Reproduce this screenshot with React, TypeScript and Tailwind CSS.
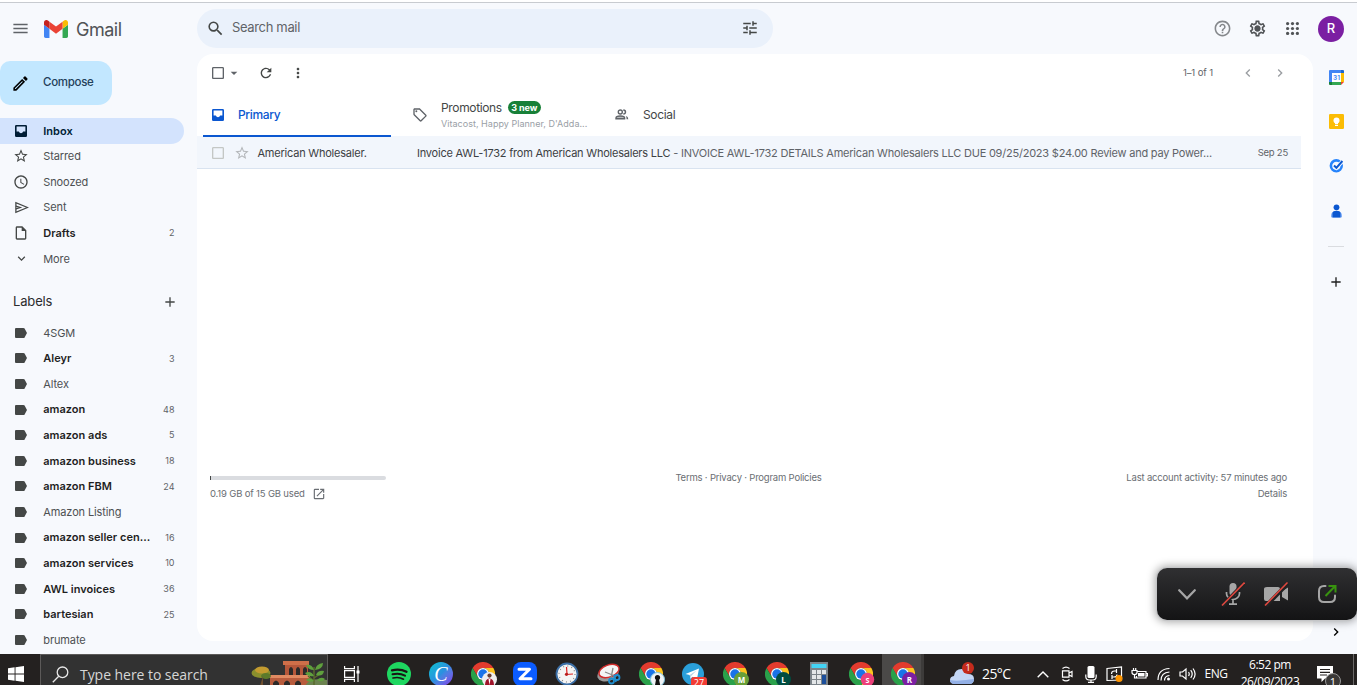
import React from 'react';
import {
    MdMenu, MdSearch, MdTune, MdHelpOutline, MdOutlineSettings, MdOutlineModeEdit,
    MdStarBorder, MdAccessTime, MdOutlineInsertDriveFile, MdExpandMore, MdAdd,
    MdCheckBoxOutlineBlank, MdArrowDropDown, MdRefresh, MdMoreVert, MdChevronLeft, MdChevronRight,
    MdOutlineLocalOffer, MdOpenInNew, MdMic,
} from 'react-icons/md';

interface NavItem {
    name: string;
    icon?: React.ReactNode;
    count?: number;
    bold?: boolean;
    active?: boolean;
}

const InboxIcon = () => (
    <svg viewBox="0 0 12 12" className="w-3 h-3" fill="currentColor" fillRule="evenodd">
        <path d="M1.300 0h9.400Q12 0 12 1.300v9.400q0 1.300-1.300 1.300H1.300Q0 12 0 10.700V1.300Q0 0 1.300 0zM1.600 1.500v5h2.200Q4.500 8.200 6 8.200t2.200-1.700h2.200v-5z" />
    </svg>
);

const SendIcon = () => (
    <svg viewBox="0 0 24 24" className="w-[15px] h-[15px]" fill="none" stroke="currentColor" strokeWidth="2">
        <path d="M3 4.200v15.600L21.500 12z" />
        <path d="M3 9.800l7 2.200-7 2.200" />
    </svg>
);

const PeopleIcon = () => (
    <svg viewBox="0 0 14 11" className="w-[14px] h-[11px]" fill="none" stroke="currentColor" strokeWidth="1.400">
        <circle cx="5.300" cy="3" r="2" />
        <path d="M1 9.800V9q0-2 4.300-2t4.300 2v.8z" fill="#b9bbbc" />
        <path d="M8.300 1q2.200.2 2.200 2t-2.200 2" />
        <path d="M10.800 7q2.500.6 2.500 3.200h-1.700q0-2-.8-3.200z" fill="currentColor" stroke="none" />
    </svg>
);

const LabelIcon = () => (
    <svg viewBox="0 0 12 10" className="w-3 h-[10px] text-[#444746]" fill="currentColor">
        <path d="M1 0h7.400q.8 0 1.200.6L12 5 9.600 9.400q-.4.6-1.200.6H1q-1 0-1-1V1q0-1 1-1z" />
    </svg>
);

const AppsIcon = () => (
    <svg viewBox="0 0 13 13" className="w-[13px] h-[13px]" fill="currentColor">
        {[1.600, 6.500, 11.400].map((y) => [1.600, 6.500, 11.400].map((x) => <circle key={`${x}-${y}`} cx={x} cy={y} r="1.600" />))}
    </svg>
);

const folders: NavItem[] = [
    { name: 'Inbox', icon: <InboxIcon />, bold: true, active: true },
    { name: 'Starred', icon: <MdStarBorder className="w-4 h-4" /> },
    { name: 'Snoozed', icon: <MdAccessTime className="w-4 h-4" /> },
    { name: 'Sent', icon: <SendIcon /> },
    { name: 'Drafts', icon: <MdOutlineInsertDriveFile className="w-4 h-4" />, count: 2, bold: true },
    { name: 'More', icon: <MdExpandMore className="w-[15px] h-[15px]" /> },
];

const labels: NavItem[] = [
    { name: '4SGM' },
    { name: 'Aleyr', count: 3, bold: true },
    { name: 'Altex' },
    { name: 'amazon', count: 48, bold: true },
    { name: 'amazon ads', count: 5, bold: true },
    { name: 'amazon business', count: 18, bold: true },
    { name: 'amazon FBM', count: 24, bold: true },
    { name: 'Amazon Listing' },
    { name: 'amazon seller cen...', count: 16, bold: true },
    { name: 'amazon services', count: 10, bold: true },
    { name: 'AWL invoices', count: 36, bold: true },
    { name: 'bartesian', count: 25, bold: true },
    { name: 'brumate' },
];

const textStyle = (item: NavItem) => {
    if (item.active) return 'font-semibold text-[#001d35]';
    return item.bold ? 'font-semibold text-[#1f1f1f]' : 'tracking-[-0.12px] text-[#4d5052]';
};

const NavRow = ({ item }: { item: NavItem }) => (
    <div className={`flex items-center h-[25.6px] w-[184px] pr-[9.5px] rounded-r-full ${item.active ? 'bg-[#d3e3fd] text-[#001d35]' : 'text-[#444746]'}`}>
        <span className="w-[42px] flex justify-center shrink-0">{item.icon || <LabelIcon />}</span>
        <span className={`flex-1 pl-[1.3px] whitespace-nowrap text-[11px] ${textStyle(item)}`}>{item.name}</span>
        {item.count && <span className="text-[9px] text-[#5f6368]">{item.count}</span>}
    </div>
);

const GmailLogo = () => (
    <svg viewBox="52 42 88 66" className="w-6 h-[18px]">
        <path fill="#4285f4" d="M58 108h14V74L52 59v43c0 3.320 2.690 6 6 6" />
        <path fill="#34a853" d="M120 108h14c3.320 0 6-2.690 6-6V59l-20 15" />
        <path fill="#fbbc04" d="M120 48v26l20-15v-8c0-7.420-8.470-11.650-14.400-7.200" />
        <path fill="#ea4335" d="M72 74V48l24 18 24-18v26L96 92" />
        <path fill="#c5221f" d="M52 51v8l20 15V48l-5.600-4.200c-5.940-4.450-14.400-.22-14.400 7.200" />
    </svg>
);

const Header = () => (
    <header className="flex items-center h-[51px] shrink-0">
        <div className="flex items-center w-[197px] pl-[11px]">
            <MdMenu className="w-[19px] h-[19px] text-[#5f6368]" />
            <div className="flex items-center ml-[14px] gap-2">
                <GmailLogo />
                <span className="pt-[2px] text-[18px] leading-none text-[#505356] tracking-[-0.5px]">Gmail</span>
            </div>
        </div>
        <div className="flex items-center w-[576px] h-[39px] rounded-full bg-[#eaf1fb] pl-[9px] pr-[14px] pb-px">
            <MdSearch className="w-[19px] h-[19px] text-[#444746]" />
            <span className="flex-1 ml-[7px] text-[13px] tracking-[-0.35px] text-[#5f6368]">Search mail</span>
            <MdTune className="w-[18px] h-[18px] text-[#444746]" />
        </div>
        <div className="flex items-center ml-auto pr-[13px] text-[#505356]">
            <span className="w-[35px] flex justify-center"><MdHelpOutline className="w-[19px] h-[19px] text-[#85888c]" /></span>
            <span className="relative w-[35px] flex justify-center items-center">
                <MdOutlineSettings className="w-[19px] h-[19px]" />
                <span className="absolute w-[5px] h-[5px] rounded-full bg-[#505356]" />
            </span>
            <span className="w-[35px] flex justify-center"><AppsIcon /></span>
            <span className="ml-2 w-[26px] h-[26px] rounded-full bg-[#7b1fa2] text-white text-[13px] font-medium flex items-center justify-center">R</span>
        </div>
    </header>
);

const Sidebar = () => (
    <aside className="w-[197px] shrink-0 flex flex-col">
        <div className="mt-[7px] w-28 h-11 bg-[#c2e7ff] rounded-r-[14px] rounded-l-[10px] flex items-center shrink-0">
            <MdOutlineModeEdit className="ml-[11px] w-[19px] h-[19px] text-black" />
            <span className="ml-[13px] text-[11.5px] font-medium tracking-[-0.3px] text-[#23405a]">Compose</span>
        </div>
        <nav className="mt-[13px]">
            {folders.map((item) => <NavRow key={item.name} item={item} />)}
        </nav>
        <div className="flex items-center h-[30px] mt-[15px] mb-[3.5px] pl-[13px] pr-[19px] shrink-0">
            <span className="flex-1 text-[13px] tracking-[-0.15px] text-[#2b2c2d]">Labels</span>
            <MdAdd className="w-4 h-4 text-[#444746]" />
        </div>
        <nav>
            {labels.map((item) => <NavRow key={item.name} item={item} />)}
        </nav>
    </aside>
);

const Toolbar = () => (
    <div className="flex items-center h-[38px] pl-[13px] pr-[25px] text-[#5f6368]">
        <MdCheckBoxOutlineBlank className="w-4 h-4" />
        <MdArrowDropDown className="w-4 h-4" />
        <MdRefresh className="ml-4 w-4 h-4 text-[#444746]" />
        <MdMoreVert className="ml-4 w-4 h-4 text-[#444746]" />
        <span className="ml-auto text-[9.5px] tracking-[-0.1px]">1–1 of 1</span>
        <MdChevronLeft className="ml-[27px] w-4 h-4 text-[#9a9da1]" />
        <MdChevronRight className="ml-4 w-4 h-4 text-[#9a9da1]" />
    </div>
);

const Tabs = () => (
    <div className="flex h-[45px] pl-[6px]">
        <div className="w-[188px] flex items-center pl-[9px] pt-[2px] border-b-2 border-[#0b57d0] text-[#0b57d0]">
            <InboxIcon />
            <span className="ml-[14px] text-[12px] font-medium tracking-[-0.35px]">Primary</span>
        </div>
        <div className="w-[202px] flex items-center pl-[21px]">
            <MdOutlineLocalOffer className="w-4 h-4 text-[#5f6368]" />
            <div className="ml-[13px] pt-[2px]">
                <div className="flex items-center gap-[6px] h-4 text-[12px] tracking-[-0.35px] text-[#444746] whitespace-nowrap">
                    Promotions
                    <span className="h-[13px] px-[3.5px] rounded-full bg-[#188038] text-white text-[9px] tracking-[-0.1px] font-bold flex items-center">3 new</span>
                </div>
                <div className="h-4 leading-4 text-[9px] tracking-[0.03px] text-[#9aa0a6] whitespace-nowrap">Vitacost, Happy Planner, D'Adda...</div>
            </div>
        </div>
        <div className="flex items-center pl-[22px] text-[#5f6368]">
            <PeopleIcon />
            <span className="ml-[14px] text-[12px] tracking-[-0.35px] text-[#444746]">Social</span>
        </div>
    </div>
);

const MailRow = () => (
    <div className="flex items-center h-[30px] pt-[2px] -mt-px w-[1104px] bg-[#f2f6fc] border-b border-[#d9e3f0] box-content text-[11px] tracking-[-0.22px] text-[#3c4043] whitespace-nowrap">
        <MdCheckBoxOutlineBlank className="ml-[13px] w-4 h-4 text-[#c4c7c5]" />
        <MdStarBorder className="ml-2 w-4 h-4 text-[#b4b7ba]" />
        <span className="ml-[7.5px] w-[159.5px]">American Wholesaler.</span>
        <span>Invoice AWL-1732 from American Wholesalers LLC</span>
        <span className="ml-[3px] text-[#5f6368]">- INVOICE AWL-1732 DETAILS American Wholesalers LLC DUE 09/25/2023 $24.00 Review and pay Power...</span>
        <span className="ml-auto mr-[13px] text-[9.5px] text-[#5f6368]">Sep 25</span>
    </div>
);

const Footer = () => (
    <div className="flex justify-between mt-[301px] pl-[13px] pr-[26px] text-[9.5px] tracking-[-0.17px] leading-4 text-[#6a6e73]">
        <div className="w-[360px]">
            <div className="h-4 flex items-center">
                <div className="w-[176px] h-1 bg-[#dadce0] rounded-r-sm"><div className="w-px h-1 bg-[#444746]" /></div>
            </div>
            <div className="flex items-center gap-[7px]">0.19 GB of 15 GB used <MdOpenInNew className="w-[14px] h-[14px]" /></div>
        </div>
        <div className="w-[360px] text-center tracking-[-0.2px]">Terms · Privacy · Program Policies</div>
        <div className="w-[360px] text-right">
            <div>Last account activity: 57 minutes ago</div>
            <div>Details</div>
        </div>
    </div>
);

const SidePanel = () => (
    <aside className="w-11 pl-[2px] shrink-0 flex flex-col items-center">
        <div className="h-[46px] flex items-center">
            <svg viewBox="0 0 15 15" className="w-[15px] h-[15px]">
                <path fill="#4285f4" d="M1 0h11v3H3v9H0V1q0-1 1-1z" />
                <path fill="#1967d2" d="M12 0h2q1 0 1 1v2h-3z" />
                <path fill="#fbbc04" d="M12 3h3v9h-3z" />
                <path fill="#34a853" d="M3 12h9v3H3z" />
                <path fill="#188038" d="M0 12h3v3H1q-1 0-1-1z" />
                <path fill="#ea4335" d="M12 12h3l-3 3z" />
                <path fill="#fff" d="M3 3h9v9H3z" />
                <text x="7.500" y="10" textAnchor="middle" fontSize="6.500" fontWeight="600" fill="#4285f4">31</text>
            </svg>
        </div>
        <div className="h-[43px] flex items-center">
            <svg viewBox="0 0 15 15" className="w-[15px] h-[15px]">
                <rect width="15" height="15" rx="1.200" fill="#fbbc04" />
                <circle cx="7.500" cy="6.600" r="3" fill="#fff" />
                <path fill="#fff" d="M6 9h3v1.300H6zM6 11h3v1H6z" />
            </svg>
        </div>
        <div className="h-[45px] flex items-center">
            <svg viewBox="0 0 15 15" className="w-[15px] h-[15px]" fill="none">
                <circle cx="7.300" cy="7.800" r="5.400" stroke="#2684fc" strokeWidth="2.600" />
                <path d="M5 7.500l2.400 2.300 6-6.600" stroke="#f8fafd" strokeWidth="3.600" />
                <path d="M5 7.500l2.400 2.300L13.400 3" stroke="#0b57d0" strokeWidth="2" />
            </svg>
        </div>
        <div className="h-[46px] flex items-center">
            <svg viewBox="0 0 13 15" className="w-[13px] h-[15px]">
                <path fill="#7baaf7" d="M1 12q0-4 3-4.500h5q3 .5 3 4.500v.5q0 1-1 1H2q-1 0-1-1z" />
                <path fill="#0b57d0" d="M2.500 13.500V9q.5-2.200 4-2.200T10.500 9v4.500z" />
                <circle cx="6.500" cy="3.300" r="2.900" fill="#0b57d0" />
            </svg>
        </div>
        <div className="mt-3 w-4 h-px bg-[#dadce0]" />
        <MdAdd className="mt-[27px] w-4 h-4 text-[#1f1f1f]" />
        <MdChevronRight className="mt-auto mb-[14px] w-4 h-4 text-black" />
    </aside>
);

// Meeting controls that float above the page
const MeetingBar = () => (
    <div className="absolute left-[1157px] top-[568px] w-[200px] h-[52px] rounded-[10px] bg-linear-to-b from-[#303032] to-[#141415] ring-1 ring-[#c4c5c7] shadow-[0_0_9px_2px_rgba(0,0,0,0.35)] flex items-center text-[#a6a6a6]">
        <svg viewBox="0 0 18 11" className="ml-[21px] w-[18px] h-[11px]" fill="none" stroke="currentColor" strokeWidth="2.200" strokeLinecap="round">
            <path d="M1.200 1.200L9 9.300l7.800-8.100" />
        </svg>
        <svg viewBox="0 0 24 26" className="ml-[25px] w-6 h-[26px]" fill="none">
            <rect x="8.500" y="2" width="7" height="13" rx="3.500" fill="currentColor" />
            <path d="M5.500 11v1.500a6.500 6 0 0 0 13 0V11M12 19v4M8 23.200h8" stroke="currentColor" strokeWidth="1.700" />
            <path d="M1.500 25L23.500 2" stroke="#222223" strokeWidth="4" />
            <path d="M1 24.500L23.500 1.500" stroke="#e0483f" strokeWidth="1.600" />
        </svg>
        <svg viewBox="0 0 26 26" className="ml-[18px] w-[26px] h-[26px]" fill="none">
            <path d="M4 6h11q2 0 2 2v12H3q-2 0-2-2V8q0-2 3-2zM19 10l6-3.500v13L19 16z" fill="currentColor" />
            <path d="M3 25L25 2.500" stroke="#222223" strokeWidth="4" />
            <path d="M2 24.500L24.500 1.500" stroke="#e0483f" strokeWidth="1.600" />
        </svg>
        <svg viewBox="0 0 20 20" className="ml-[28px] w-5 h-5" fill="none" strokeWidth="2">
            <path d="M8.500 2H7Q2 2 2 7v6q0 5 5 5h6q5 0 5-5v-1.500" stroke="currentColor" strokeLinecap="round" />
            <path d="M8.500 12L18 2.200M11.500 2H18.500v6.500" stroke="#38930f" />
        </svg>
    </div>
);

const Chrome = ({ children }: { children?: React.ReactNode }) => (
    <div className="relative w-6 h-6">
        <svg viewBox="0 0 48 48" className="w-6 h-6">
            <path fill="#e33b2e" d="M3.200 12A24 24 0 0 1 44.800 12H24A12 12 0 0 0 13.600 30z" />
            <path fill="#fcc31e" d="M44.800 12A24 24 0 0 1 24 48L34.400 30A12 12 0 0 0 24 12z" />
            <path fill="#2aa14a" d="M24 48A24 24 0 0 1 3.200 12L13.600 30A12 12 0 0 0 34.400 30z" />
            <circle cx="24" cy="24" r="12" fill="#fff" />
            <circle cx="24" cy="24" r="9.500" fill="#1a73e8" />
        </svg>
        {children}
    </div>
);

const badge = 'absolute left-[11px] top-[10px] w-[15px] h-[15px] rounded-full flex items-center justify-center text-[8px] font-bold text-white';

const TaskbarApps = () => {
    const apps: React.ReactNode[] = [
        <svg viewBox="0 0 24 24" className="w-6 h-6" fill="none" stroke="#191414" strokeLinecap="round">
            <circle cx="12" cy="12" r="12" fill="#1ed760" stroke="none" />
            <path d="M5 8.300q8-2 14.500 1.500" strokeWidth="2.300" />
            <path d="M5.500 12.300q7-1.700 12.500 1.400" strokeWidth="2" />
            <path d="M6 16q6-1.400 10.500 1.200" strokeWidth="1.600" />
        </svg>,
        <div className="w-6 h-6 rounded-full bg-linear-to-br from-[#00c4cc] via-[#2b8fe0] to-[#7d2ae8] text-white text-[20px] leading-none italic font-['Liberation_Serif',serif] flex items-center justify-center">C</div>,
        <Chrome>
            <svg viewBox="0 0 15 15" className="absolute left-[11px] top-[10px] w-[15px] h-[15px]">
                <circle cx="7.500" cy="7.500" r="7.500" fill="#eee" />
                <path d="M3 13.500Q3 7 7.500 6.500 12 7 12 13.500l-2 1H5z" fill="#a0142a" />
                <path d="M6.500 7h2l-1 6z" fill="#fff" />
                <circle cx="7.500" cy="3.600" r="2.100" fill="#6b4031" />
            </svg>
        </Chrome>,
        <svg viewBox="0 0 24 24" className="w-6 h-6">
            <rect width="24" height="24" rx="8" fill="#0b5cff" />
            <path d="M6 7.200h10.500L7 16.800h11" fill="none" stroke="#fff" strokeWidth="3" strokeLinejoin="round" strokeLinecap="round" />
        </svg>,
        <svg viewBox="0 0 24 24" className="w-6 h-6" fill="none">
            <circle cx="12" cy="12" r="10.500" fill="#f4f4f4" stroke="#3b6ea5" strokeWidth="1.800" />
            <circle cx="12" cy="12" r="8" stroke="#888" strokeWidth="1.200" strokeDasharray="1 3.190" />
            <path d="M11 12.500l7-.5M12 12L11.500 5" stroke="#d22" strokeWidth="1.200" />
            <circle cx="11.500" cy="12.300" r="1.600" fill="#b91c1c" />
        </svg>,
        <svg viewBox="0 0 24 24" className="w-6 h-6" fill="none">
            <ellipse cx="11" cy="12" rx="11" ry="7" fill="#999" transform="rotate(-20 11 12)" />
            <ellipse cx="12" cy="9" rx="10.500" ry="6" fill="#f5f5f5" stroke="#d22b2b" strokeWidth="1.400" transform="rotate(-20 12 9)" />
            <path d="M8 10l10 4M16 6l-2 10" stroke="#8a8a8a" strokeWidth="1.300" />
            <circle cx="20" cy="15.500" r="2.500" stroke="#1f8fd0" strokeWidth="1.800" />
            <circle cx="14.500" cy="19" r="2.500" stroke="#1f8fd0" strokeWidth="1.800" />
            <path d="M17 13l2 7" stroke="#1f8fd0" strokeWidth="1.600" />
        </svg>,
        <Chrome>
            <svg viewBox="0 0 15 15" className="absolute left-[11px] top-[10px] w-[15px] h-[15px]">
                <circle cx="7.500" cy="7.500" r="7" fill="#f0f3f5" stroke="#7cc4dd" />
                <circle cx="7.500" cy="5.500" r="2.600" fill="#111" />
                <path d="M6.300 6h2.400l1.500 7H5z" fill="#111" />
            </svg>
        </Chrome>,
        <div className="relative w-[22px] h-[22px]">
            <svg viewBox="0 0 22 22" className="w-[22px] h-[22px]">
                <circle cx="11" cy="11" r="11" fill="#2a9fda" />
                <path d="M3.500 11L17 5.500 14.800 17l-4.300-3.200-2 2-.8-3.800z" fill="#fff" />
                <path d="M7.700 12L14.500 7.500 9.200 13l-.7 2.800z" fill="#b5d4e8" />
            </svg>
            <span className="absolute left-[9px] top-[14px] w-4 h-4 rounded-[3px] bg-[#f23c34] text-white text-[9px] leading-[12px] text-center">27</span>
        </div>,
        <Chrome><span className={`${badge} bg-[#689f38]`}>M</span></Chrome>,
        <Chrome><span className={`${badge} bg-[#004d40]`}>L</span></Chrome>,
        <svg viewBox="0 0 18 24" className="w-[18px] h-6">
            <rect width="18" height="24" fill="#7b8389" />
            <rect x="1.500" y="2" width="15" height="4" fill="#43d3f5" />
            <path fill="#e3e6e8" d="M2 8h4v4H2zM7 8h4v4H7zM12 8h4v4h-4zM2 13h4v4H2zM7 13h4v4H7zM2 18h4v4H2zM7 18h4v4H7z" />
            <path fill="#1c4f9c" d="M12 13h4v9h-4z" />
        </svg>,
        <Chrome><span className={`${badge} bg-[#ec407a] scale-90`}>S</span></Chrome>,
        <Chrome><span className={`${badge} bg-[#7b1fa2]`}>R</span></Chrome>,
    ];
    return (
        <div className="flex h-10">
            {apps.map((app, i) => (
                <div key={i} className={`w-[42px] h-10 flex items-center justify-center ${i === apps.length - 1 ? 'bg-[#4b4948] border-r-[3px] border-[#3d3b3a] pl-[3px]' : ''}`}>
                    {app}
                </div>
            ))}
        </div>
    );
};

const SearchArt = () => (
    <svg viewBox="0 0 76 25" className="w-[76px] h-[25px] shrink-0">
        <path d="M32 0h26v4H32z" fill="#cf6f49" />
        <path d="M34 4h23v12H34z" fill="#b4573a" />
        <path d="M38 14V8q2-4 4 0v6zM45 14V8q2-4 4 0v6zM52 14V8q2-4 4 0v6z" fill="#2c2a29" />
        <path d="M17 14h42v3H17z" fill="#e08a62" />
        <path d="M19 17h40v8H19z" fill="#b85c3d" />
        <path d="M22 25v-3q3-5 6 0v3zM33 25v-3q3-5 6 0v3zM44 25v-3q3-5 6 0v3z" fill="#2c2a29" />
        <path d="M54 25q4-9 22-6v6z" fill="#6c8350" />
        <ellipse cx="10" cy="12" rx="9.500" ry="5" fill="#8a8f2d" />
        <ellipse cx="11" cy="9" rx="7" ry="3.500" fill="#c39b30" />
        <ellipse cx="15" cy="15" rx="5" ry="3" fill="#5c7a2b" />
        <path d="M12 15l-3 10h3z" fill="#70502f" />
        <path d="M63 25V6M63 17l6-4M63 20l-6-5" stroke="#5a6b2c" strokeWidth="1.500" fill="none" />
        <path fill="#5fa03d" d="M63 9q-6 0-8-5 6-1 8 5zM64 9q1-6 8-7 0 6-8 7zM63 15q-6 1-9-3 6-3 9 3zM65 14q2-5 8-4-1 6-8 4zM63 20q-5 2-8-1 4-4 8 1zM66 19q4-4 8-1-3 4-8 1z" />
    </svg>
);

const Taskbar = () => (
    <footer className="h-[31px] shrink-0 overflow-hidden bg-[#242120] text-white font-['Open_Sans','Noto_Sans',sans-serif]">
        <div className="flex h-10">
            <div className="w-10 flex items-center pl-2">
                <svg viewBox="0 0 16 16" className="w-4 h-4" fill="#fff">
                    <path d="M0 2.200l6.600-.9v6.200H0zM7.500 1.200L16 0v7.500H7.500zM0 8.400h6.600v6.300L0 13.800zM7.500 8.400H16V16l-8.500-1.200z" />
                </svg>
            </div>
            <div className="flex items-center w-[288px] border border-[#5c5a59] bg-[#323232]">
                <svg viewBox="0 0 17 17" className="ml-[11px] w-[17px] h-[17px]" fill="none" stroke="#e8e8e8" strokeWidth="1.300">
                    <circle cx="10.500" cy="6.300" r="5.300" />
                    <path d="M6.700 10.200L.8 16.200" />
                </svg>
                <span className="ml-[11px] text-[14px] tracking-[-0.05px] text-[#d6d6d6] whitespace-nowrap">Type here to search</span>
                <div className="ml-auto h-10 flex items-start pt-[7px] overflow-hidden"><SearchArt /></div>
            </div>
            <div className="w-12 flex items-center justify-center">
                <svg viewBox="0 0 16 16" className="w-4 h-4" fill="none" stroke="#fff" strokeWidth="1.200">
                    <path d="M.6 0v2.600h9.800V0M.6 4.600h9.800v6.800H.6zM.6 16v-2.600h9.800V16M14 0v16" />
                    <path d="M12.500 4.500h3v3h-3z" fill="#fff" stroke="none" />
                </svg>
            </div>
            <div className="ml-[2px]"><TaskbarApps /></div>
            <div className="relative ml-[26px] w-6 flex items-center">
                <svg viewBox="0 0 24 15" className="w-6 h-[15px] mt-1">
                    <path d="M5 15q-5 0-5-4 0-3.500 4-4Q5 0 11.500 0 17 0 18 5q6 0 6 5 0 5-5 5z" fill="#c3d6f5" />
                    <path d="M5 15q-5 0-5-4 5 1 10 .5T24 10q0 5-5 5z" fill="#93b0e6" />
                </svg>
                <span className="absolute left-3 top-2 w-3 h-3 rounded-full bg-[#c42b1c] text-[9px] leading-3 text-center">1</span>
            </div>
            <span className="ml-2 w-[49px] leading-10 text-[14px] tracking-[-0.6px]">25°C</span>
            <div className="w-6 flex items-center justify-center">
                <svg viewBox="0 0 12 7" className="w-3 h-[7px]" fill="none" stroke="#fff" strokeWidth="1.400"><path d="M.7 6.300L6 1l5.300 5.300" /></svg>
            </div>
            <div className="w-6 flex items-center justify-center">
                <svg viewBox="0 0 12 16" className="w-3 h-4" fill="none" stroke="#fff" strokeWidth="1.200">
                    <path d="M1.500 4.800H8v6.400H1.500zM8 7l3-1.500v5L8 9M1.500 2.500Q5-.3 8.500 2.500M1.500 13.500q3.500 2.800 7 0" />
                </svg>
            </div>
            <div className="w-[23px] flex items-center justify-center">
                <svg viewBox="0 0 12 17" className="w-3 h-[17px]" fill="none" stroke="#fff" strokeWidth="1.200">
                    <rect x="2.500" y="0" width="7" height="12" rx="1.500" fill="#fff" stroke="none" />
                    <path d="M.8 8.500v2q0 3.500 3.500 3.500h3.400q3.500 0 3.500-3.500v-2M6 14v2.300M3 16.300h6" />
                </svg>
            </div>
            <div className="w-[25px] flex items-center justify-center">
                <svg viewBox="0 0 17 16" className="w-[17px] h-4" fill="none" stroke="#fff" strokeWidth="1.200">
                    <path d="M1 2.500L15.500 1v13L1 14.500zM5.500 8q0-3 3-3h2M10.500 3v4M11 8.500q0 2.500-3 2.500H6M6 9v4" />
                    <circle cx="13" cy="12.500" r="3.500" fill="#ff9500" stroke="none" />
                </svg>
            </div>
            <div className="w-6 flex items-center justify-center">
                <svg viewBox="0 0 17 12" className="w-[17px] h-3" fill="none" stroke="#fff" strokeWidth="1.200">
                    <path d="M6.500 3.500H15V10H5.500V8M15.500 5.500h1V8h-1M1 2.500h5v2q0 2-2.500 2T1 4.500zM2.500 2.500V0M4.700 2.500V0M3.500 6.500V10h2" />
                    <path d="M7 5h6.500v3.500H7z" fill="#fff" stroke="none" />
                </svg>
            </div>
            <div className="w-[25px] flex items-center justify-center">
                <svg viewBox="0 0 14 14" className="w-[14px] h-[14px]" fill="none" stroke="#fff" strokeWidth="1.200">
                    <path d="M1 13Q1 2 12.500 1.500M4 13.500q0-8 8.500-8.500M7.500 13.500q0-4.500 5-5" />
                    <circle cx="11.500" cy="12" r="1.500" fill="#fff" stroke="none" />
                </svg>
            </div>
            <div className="w-[23px] flex items-center justify-center">
                <svg viewBox="0 0 17 14" className="w-[17px] h-[14px]" fill="none" stroke="#fff" strokeWidth="1.200">
                    <path d="M1 5h2.500L7 2v10L3.500 9H1zM9.500 5q1.500 2 0 4M11.700 3.200q3 3.800 0 7.600M14 1.500q4.200 5.500 0 11" />
                </svg>
            </div>
            <span className="w-[34px] leading-10 text-[12px] text-center tracking-[-0.4px]">ENG</span>
            <div className="w-[74px] pt-[2px] text-[12px] leading-[17px] text-center tracking-[-0.5px]">
                <div>6:52 pm</div>
                <div>26/09/2023</div>
            </div>
            <div className="relative w-[45px] pl-[10px] flex items-center">
                <svg viewBox="0 0 16 16" className="w-4 h-4">
                    <path d="M0 0h16v12.500H8L4.500 16v-3.500H0z" fill="#fff" />
                    <path d="M3 3.500h10M3 6.300h10M3 9h7" stroke="#242120" strokeWidth="1.200" />
                </svg>
                <span className="absolute left-[18px] top-[19px] w-4 h-4 rounded-full border border-[#999] bg-[#3a3837] text-[11px] leading-[15px] text-center">1</span>
            </div>
            <div className="ml-px w-px h-10 bg-[#6b6968]" />
        </div>
    </footer>
);

const App: React.FC = () => {
    return (
        <div className="relative w-[1357px] h-[685px] overflow-hidden flex flex-col bg-[#f7f9fd] font-['Inter',sans-serif]">
            <div className="h-[3px] shrink-0 bg-white border-b border-[#c8cbd0]" />
            <Header />
            <div className="flex h-[600px] shrink-0 overflow-hidden">
                <Sidebar />
                <main className="w-[1116px] h-[587px] bg-white rounded-2xl">
                    <Toolbar />
                    <Tabs />
                    <MailRow />
                    <Footer />
                </main>
                <SidePanel />
            </div>
            <Taskbar />
            <MeetingBar />
        </div>
    );
};

export default App;
